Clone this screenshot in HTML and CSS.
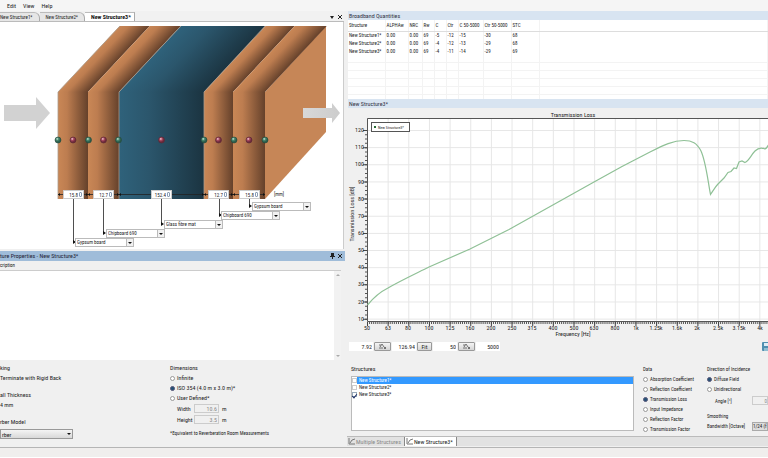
FILE: index.html
```
<!DOCTYPE html>
<html lang="en">
<head>
<meta charset="utf-8">
<title>New Structure3*</title>
<link rel="stylesheet" href="styles.css">
</head>
<body>
<nav class="menu"><a href="#">Edit</a><a href="#">View</a><a href="#">Help</a></nav>
<main class="workspace">
  <section class="left">
    <div class="doc-tabs">
      <button class="doc-tab">New Structure1*</button>
      <button class="doc-tab">New Structure2*</button>
      <button class="doc-tab active">New Structure3*</button>
      <span class="win-icons"><svg width="6" height="6" viewBox="0 0 6 6"><path d="M1 2h4L3 5z"/></svg><svg width="6" height="6" viewBox="0 0 6 6"><path class="cross" d="M1 1l4 4M5 1l-4 4"/></svg></span>
    </div>
    <div class="canvas">
      <svg class="layers" width="345" height="227" viewBox="0 22 345 227">
        <defs>
          <linearGradient id="wood"><stop offset="0" stop-color="#c98756"/><stop offset=".3" stop-color="#bd7d50"/><stop offset="1" stop-color="#65412b"/></linearGradient>
          <linearGradient id="wool"><stop offset="0" stop-color="#2f627b"/><stop offset=".35" stop-color="#2b566c"/><stop offset="1" stop-color="#1b3441"/></linearGradient>
          <linearGradient id="arrow"><stop offset="0" stop-color="#d8d8d8"/><stop offset="1" stop-color="#cccccc"/></linearGradient>
          <radialGradient id="green" cx=".38" cy=".32"><stop offset="0" stop-color="#d5eee2"/><stop offset=".45" stop-color="#4d8d74"/><stop offset="1" stop-color="#2a5c4a"/></radialGradient>
          <radialGradient id="red" cx=".38" cy=".32"><stop offset="0" stop-color="#f6dce2"/><stop offset=".45" stop-color="#b04e66"/><stop offset="1" stop-color="#6f2a3c"/></radialGradient>
        </defs>
        <path d="M265 92L326 26V132L265 199z" fill="#c68657"/>
        <g transform="matrix(1 0 -.935 1 86 0)">
          <rect x="58" y="26" width="30" height="66" fill="url(#wood)"/>
          <rect x="88" y="26" width="31" height="66" fill="url(#wood)"/>
          <rect x="119" y="26" width="85" height="66" fill="url(#wool)"/>
          <rect x="204" y="26" width="29" height="66" fill="url(#wood)"/>
          <rect x="233" y="26" width="32" height="66" fill="url(#wood)"/>
        </g>
        <rect x="58" y="92" width="30" height="107" fill="url(#wood)"/>
        <rect x="88" y="92" width="31" height="107" fill="url(#wood)"/>
        <rect x="119" y="92" width="85" height="107" fill="url(#wool)"/>
        <rect x="204" y="92" width="29" height="107" fill="url(#wood)"/>
        <rect x="233" y="92" width="32" height="107" fill="url(#wood)"/>
        <path d="M58 199V92L120 26M119 199V92L181 26M204 199V92L265 26" fill="none" stroke="#a99a8c" stroke-width=".8"/>
        <path d="M4 105H36V97L50 113L36 129V121H4z" fill="#d2d2d2"/>
        <path d="M303 108H332V103L340 113L332 123V118H303z" fill="url(#arrow)"/>
        <path d="M58 194.500H265M73.500 199V242M103.500 199V233M161.500 199V224M219.500 199V215M249.500 199V206" fill="none" stroke="#222" stroke-width=".8"/>
        <path d="M60 193l-2 1.500 2 1.500zM86 193l2 1.500-2 1.500zM90 193l-2 1.500 2 1.500zM117 193l2 1.500-2 1.500zM121 193l-2 1.500 2 1.500zM202 193l2 1.500-2 1.500zM206 193l-2 1.500 2 1.500zM231 193l2 1.500-2 1.500zM235 193l-2 1.500 2 1.500zM263 193l2 1.500-2 1.500zM73 240l3 2-3 2zM103 231l3 2-3 2zM161 222l3 2-3 2zM219 213l3 2-3 2zM249 204l3 2-3 2z" fill="#111"/>
        <g fill="url(#green)" stroke="#24483b" stroke-width=".6"><circle cx="58" cy="140" r="3"/><circle cx="88.500" cy="140" r="3"/><circle cx="118.500" cy="140" r="3"/><circle cx="204" cy="140" r="3"/><circle cx="234" cy="140" r="3"/><circle cx="265" cy="140" r="3"/></g>
        <g fill="url(#red)" stroke="#572532" stroke-width=".6"><circle cx="73" cy="140" r="3"/><circle cx="103.500" cy="140" r="3"/><circle cx="161.500" cy="140" r="3"/><circle cx="218.500" cy="140" r="3"/><circle cx="249" cy="140" r="3"/></g>
      </svg>
      <label class="thick t1"><input value="15.8" aria-label="Thickness 1"><i></i></label>
      <label class="thick t2"><input value="12.7" aria-label="Thickness 2"><i></i></label>
      <label class="thick t3"><input value="152.4" aria-label="Thickness 3"><i></i></label>
      <label class="thick t4"><input value="12.7" aria-label="Thickness 4"><i></i></label>
      <label class="thick t5"><input value="15.8" aria-label="Thickness 5"><i></i></label>
      <span class="unit">[mm]</span>
      <label class="combo m1"><select aria-label="Material 1"><option>Gypsum board</option></select><i></i></label>
      <label class="combo m2"><select aria-label="Material 2"><option>Chipboard 690</option></select><i></i></label>
      <label class="combo m3"><select aria-label="Material 3"><option>Glass fibre mat</option></select><i></i></label>
      <label class="combo m4"><select aria-label="Material 4"><option>Chipboard 690</option></select><i></i></label>
      <label class="combo m5"><select aria-label="Material 5"><option>Gypsum board</option></select><i></i></label>
    </div>
    <div class="prop-title"><span>ture Properties - New Structure3*</span><span class="win-icons"><svg width="6" height="6" viewBox="0 0 6 6"><path d="M2 0h3v3h1v1H4v2H3V4H1V3h1z"/></svg><svg width="6" height="6" viewBox="0 0 6 6"><path class="cross" d="M1 1l4 4M5 1l-4 4"/></svg></span></div>
    <label class="desc-label" for="desc">cription</label>
    <div class="desc"><textarea id="desc"></textarea><div class="scroll"><i class="up"></i><i class="down"></i></div></div>
    <div class="props">
      <div class="backing">
        <h3>king</h3>
        <p>Terminate with Rigid Back</p>
        <h3 class="gap">all Thickness</h3>
        <p>4 mm</p>
        <h3 class="gap"><label for="model">rber Model</label></h3>
        <div class="combo model"><select id="model"><option>rber</option></select><i></i></div>
      </div>
      <fieldset class="dims">
        <legend>Dimensions</legend>
        <label class="radio"><input type="radio" name="dim">Infinite</label>
        <label class="radio"><input type="radio" name="dim" checked>ISO 354 (4.0 m x 3.0 m)*</label>
        <label class="radio"><input type="radio" name="dim">User Defined*</label>
        <div class="size"><label for="w">Width</label><input id="w" value="10.6" disabled><span>m</span></div>
        <div class="size"><label for="h">Height</label><input id="h" value="3.5" disabled><span>m</span></div>
        <p class="note">*Equivalent to Reverberation Room Measurements</p>
      </fieldset>
    </div>
  </section>
  <section class="right">
    <h2 class="bar">Broadband Quantities</h2>
    <div class="quantities">
      <table>
        <colgroup><col class="c1"><col class="c2"><col class="c3"><col class="c4"><col class="c4"><col class="c4"><col class="c5"><col class="c6"><col class="c6"><col></colgroup>
        <thead><tr><th>Structure</th><th>ALPHAw</th><th>NRC</th><th>Rw</th><th>C</th><th>Ctr</th><th>C 50-5000</th><th>Ctr 50-5000</th><th>STC</th><th></th></tr></thead>
        <tbody>
        <tr><td>New Structure1*</td><td>0.00</td><td>0.00</td><td>69</td><td>-5</td><td>-12</td><td>-15</td><td>-30</td><td>68</td><td></td></tr>
        <tr><td>New Structure2*</td><td>0.00</td><td>0.00</td><td>69</td><td>-4</td><td>-12</td><td>-13</td><td>-29</td><td>68</td><td></td></tr>
        <tr><td>New Structure3*</td><td>0.00</td><td>0.00</td><td>69</td><td>-4</td><td>-11</td><td>-14</td><td>-29</td><td>69</td><td></td></tr>
        </tbody>
        <tfoot><tr><td></td><td></td><td></td><td></td><td></td><td></td><td></td><td></td><td></td><td></td></tr></tfoot>
      </table>
    </div>
    <h2 class="bar">New Structure3*</h2>
    <svg class="chart" viewBox="345 108 423 230">
      <defs><pattern id="grid" x="367" y="130" width="20.65" height="17.15" patternUnits="userSpaceOnUse"><path d="M0 .5H20.650M.5 0V17.150" stroke="#e6e6e6" fill="none"/></pattern></defs>
      <rect x="367" y="118" width="402" height="203" fill="#fff"/>
      <rect x="367" y="118" width="402" height="203" fill="url(#grid)"/>
      <path d="M768 118.500H367.500V321.500H768" fill="none" stroke="#555"/>
      <path d="M367 323H768" stroke="#555" stroke-width="2" stroke-dasharray="1 1.065"/>
      <path d="M367 324H768" stroke="#444" stroke-width="4" stroke-dasharray="1 19.65"/>
      <path d="M366 130V321" stroke="#555" stroke-width="2" stroke-dasharray="1 3.288"/>
      <path d="M365 130V320" stroke="#444" stroke-width="4" stroke-dasharray="1 16.15"/>
      <path d="M367.500 305C374 297 381 291.500 388 288C400 281 415 274 429 267L470 249L509 229.500L560 201L594 182L622 166.500L650 152C664 145 673 140.500 684 140.500C692 140.500 697 143 701 151C706 162 708 182 710.500 194.500C713 191 715 187 718 184L724 178L728 172.500L731 171.500L734 168L736.500 168.500L739 162L742 161L745 162.500C749 161 751 155 755 151C759 147 763 148 765 149C767 148 768 146 769 144" fill="none" stroke="#8fc096" stroke-width="1.200"/>
      <rect x="371.500" y="122.500" width="38" height="9" fill="#fff" stroke="#555"/>
      <rect x="374" y="126" width="2" height="2" fill="#276b35"/>
      <text x="378" y="129" class="small">New Structure3*</text>
      <g class="mid"><text x="573" y="117">Transmission Loss</text><text x="573" y="336">Frequency [Hz]</text><text transform="translate(354 214) rotate(-90)">Transmission Loss [dB]</text>
      <text x="367" y="330">50</text><text x="388" y="330">63</text><text x="408" y="330">80</text><text x="429" y="330">100</text><text x="450" y="330">125</text><text x="470" y="330">160</text><text x="491" y="330">200</text><text x="512" y="330">250</text><text x="532" y="330">315</text><text x="553" y="330">400</text><text x="574" y="330">500</text><text x="594" y="330">630</text><text x="615" y="330">800</text><text x="636" y="330">1k</text><text x="656" y="330">1.25k</text><text x="677" y="330">1.6k</text><text x="697" y="330">2k</text><text x="718" y="330">2.5k</text><text x="739" y="330">3.15k</text><text x="760" y="330">4k</text></g>
      <g class="end"><text x="364" y="132">120</text><text x="364" y="149">110</text><text x="364" y="166">100</text><text x="364" y="184">90</text><text x="364" y="201">80</text><text x="364" y="218">70</text><text x="364" y="235">60</text><text x="364" y="252">50</text><text x="364" y="269">40</text><text x="364" y="286">30</text><text x="364" y="304">20</text><text x="364" y="321">10</text></g>
    </svg>
    <div class="ranges">
      <input value="7.92" aria-label="Y minimum"><button aria-label="Y axis"><svg width="9" height="7" viewBox="0 0 9 7"><path d="M1 2h2M2 4l2-3 2 3M1 5h4M6 4l2 2M8 4l-2 2"/></svg></button>
      <input value="126.94" aria-label="Y maximum"><button class="fit">Fit</button>
      <input value="50" aria-label="X minimum"><button aria-label="X axis"><svg width="9" height="7" viewBox="0 0 9 7"><path d="M1 2h2M2 4l2-3 2 3M1 5h4M6 4l2 2M8 4l-2 2"/></svg></button>
      <input value="5000" aria-label="X maximum">
      <button class="save" aria-label="Save"><svg width="6" height="9" viewBox="0 0 6 9"><rect width="8" height="9" rx="1" fill="#4f8fb0"/><rect x="2" y="1" width="4" height="3" fill="#dcecf5"/><rect x="2" y="6" width="4" height="3" fill="#91bdd2"/></svg></button>
    </div>
    <div class="options">
      <div class="structs">
        <h3>Structures</h3>
        <div class="list">
          <label class="check sel"><input type="checkbox"><span>New Structure1*</span></label>
          <label class="check"><input type="checkbox"><span>New Structure2*</span></label>
          <label class="check"><input type="checkbox" checked><span>New Structure3*</span></label>
        </div>
      </div>
      <fieldset class="data">
        <legend>Data</legend>
        <label class="radio"><input type="radio" name="data">Absorption Coefficient</label>
        <label class="radio"><input type="radio" name="data">Reflection Coefficient</label>
        <label class="radio"><input type="radio" name="data" checked>Transmission Loss</label>
        <label class="radio"><input type="radio" name="data">Input Impedance</label>
        <label class="radio"><input type="radio" name="data">Reflection Factor</label>
        <label class="radio"><input type="radio" name="data">Transmission Factor</label>
      </fieldset>
      <div class="incidence">
        <fieldset>
          <legend>Direction of Incidence</legend>
          <label class="radio"><input type="radio" name="inc" checked>Diffuse Field</label>
          <label class="radio"><input type="radio" name="inc">Unidirectional</label>
          <div class="field angle"><label for="angle">Angle [°]</label><input id="angle" value="0" disabled></div>
        </fieldset>
        <h3>Smoothing</h3>
        <div class="field"><label for="bw">Bandwidth [Octave]</label><select id="bw"><option>1/24 (f</option></select></div>
      </div>
    </div>
    <div class="bottom-tabs">
      <button class="btab"><svg width="7" height="7" viewBox="0 0 7 7"><path d="M1 0v6h6M2 5l2-3 3-1"/></svg>Multiple Structures</button>
      <button class="btab active"><svg width="7" height="7" viewBox="0 0 7 7"><path d="M1 0v6h6M2 5l2-3 3-1"/></svg>New Structure3*</button>
    </div>
  </section>
</main>
<footer class="status"></footer>
</body>
</html>
```

FILE: styles.css
```
* { box-sizing: border-box; }
body {
  margin: 0;
  background: #fff;
  color: #222;
  font: 6px/10px "Roboto Condensed", "Open Sans Condensed", Lato, "Liberation Sans", sans-serif;
}
button, input, select, textarea {
  font: inherit;
  color: inherit;
  margin: 0;
  padding: 0;
  border: 0;
  border-radius: 0;
  background: none;
  appearance: none;
  outline: 0;
  min-width: 0;
}
h2, h3, p { margin: 0; font: inherit; }
fieldset { margin: 0; padding: 0; border: 0; min-width: 0; }
legend { display: block; padding: 0; height: 10px; }
svg { display: block; }

.menu { display: flex; gap: 7px; height: 11px; padding-left: 7px; background: #f5f5f5; }
.menu a { color: #222; text-decoration: none; line-height: 12px; }
.workspace { display: grid; grid-template-columns: 345fr 423fr; padding-bottom: 1px; background: #f0f0f0; border-bottom: 1px solid #b5b5b5; }
.left, .right { display: flex; flex-direction: column; min-width: 0; }
.status { height: 9px; background: #f0eeed; }

.doc-tabs { display: flex; align-items: stretch; height: 11px; margin-right: 1px; padding-top: 1px; border-bottom: 1px solid #bbb; background: #f1f1f1; font-size: 5px; }
.doc-tab { padding: 0 6px 0 0; border-top: 1px solid #bbb; border-right: 1px solid #aaa; border-radius: 0 6px 0 0; background: #e6e6e6; line-height: 8px; }
.doc-tab + .doc-tab { padding-left: 6px; }
.doc-tab.active { padding-right: 3px; border-radius: 0; background: #fff; font-size: 6px; font-weight: bold; color: #111; }
.win-icons { display: flex; align-items: center; gap: 2px; margin-left: auto; padding-right: 1px; }
.win-icons svg { fill: #222; }
.cross { stroke: #222; fill: none; }

.canvas { position: relative; height: 227px; margin-right: 1px; background: #fff; border-right: 1px solid #ccc; overflow: hidden; }
.thick { position: absolute; top: 168px; display: flex; align-items: center; width: 21px; height: 9px; background: #fff; border: 1px solid #ccc; }
.thick input { width: 14px; height: 7px; text-align: right; font-size: 5px; }
.thick i { width: 3px; height: 5px; margin-left: 1px; border: 1px solid #8a9db5; border-radius: 1px; }
.t1 { left: 63px; } .t2 { left: 93px; } .t3 { left: 151px; } .t4 { left: 208px; } .t5 { left: 239px; }
.unit { position: absolute; left: 274px; top: 167px; font-size: 5px; }
.combo { display: flex; align-items: center; width: 59px; height: 9px; background: #fff; border: 1px solid #bbb; }
.combo select { flex: 1; height: 7px; padding-left: 1px; line-height: 7px; }
.combo i { display: grid; place-items: center; width: 7px; height: 7px; border-left: 1px solid #bbb; background: #f1f1f1; }
.combo i::after { content: ""; border: 2px solid transparent; border-top-color: #111; border-bottom: 0; }
.canvas .combo { position: absolute; }
.canvas select { font-size: 5px; }
.m1 { left: 75px; top: 216px; } .m2 { left: 106px; top: 207px; } .m3 { left: 164px; top: 198px; } .m4 { left: 221px; top: 189px; } .m5 { left: 252px; top: 180px; }

.prop-title { display: flex; height: 10px; margin-top: 2px; padding-right: 1px; background: #9fbcd9; color: #223; }
.desc-label { height: 9px; line-height: 9px; font-size: 5px; }
.desc { display: flex; height: 90px; margin-right: 4px; border-top: 1px solid #ccc; background: #fff; }
.desc textarea { flex: 1; resize: none; }
.scroll { display: flex; flex-direction: column; justify-content: space-between; align-items: center; width: 7px; padding: 3px 0; background: #f2f2f2; }
.up, .down { border: 2px solid transparent; }
.up { border-bottom-color: #aaa; border-top: 0; }
.down { border-top-color: #aaa; border-bottom: 0; }

.props { display: grid; grid-template-columns: 170fr 175fr; padding-top: 3px; }
.backing .gap { margin-top: 7px; }
.model { width: 73px; height: 10px; margin-top: 2px; border-color: #999; background: linear-gradient(#f4f4f4, #d8d8d8); }
.model i { border: 0; background: none; }
.radio { display: flex; align-items: center; gap: 2px; height: 10px; white-space: nowrap; }
.radio input { flex: none; width: 5px; height: 5px; border: 1px solid #999; border-radius: 50%; background: #fff; }
.radio input:checked { border-color: #557; background: #245277; }
.size { display: grid; grid-template-columns: 16px 25px auto; align-items: center; gap: 1px; height: 11px; padding-left: 7px; }
.size input { height: 9px; padding-right: 1px; border: 1px solid #ccc; text-align: right; color: #888; }
.size span { padding-left: 2px; }
.note { font-size: 5px; margin-top: 3px; white-space: nowrap; }

.right { padding-left: 2px; }
.bar { height: 9px; margin-left: 1px; padding-left: 1px; background: #d8e4f1; line-height: 9px; color: #334; }
.quantities { height: 79px; margin-left: 1px; background: #fff; font-size: 5px; overflow: hidden; }
table { width: 100%; table-layout: fixed; border-collapse: collapse; }
th, td { height: 8px; padding: 0 0 0 1px; line-height: 7px; font-weight: normal; text-align: left; white-space: nowrap; border-right: 1px solid #f3f3f3; }
th { height: 11px; border-bottom: 1px solid #ddd; }
tfoot td { height: 44px; background: repeating-linear-gradient(#fff 0 7px, #f3f3f3 7px 8px); }
.c1 { width: 37px; } .c2 { width: 23px; } .c3 { width: 14px; } .c4 { width: 12px; } .c5 { width: 25px; } .c6 { width: 28px; }
.chart { width: auto; margin-left: -2px; }
.chart text { fill: #222; }
.chart .small { font-size: 4px; }
.mid { text-anchor: middle; }
.end { text-anchor: end; }

.ranges { display: flex; align-items: center; gap: 1px; height: 17px; padding-left: 2px; }
.ranges input { width: 24px; height: 9px; padding-right: 1px; background: #fff; text-align: right; }
.ranges button { display: grid; place-items: center; width: 17px; height: 9px; border: 1px solid #999; border-radius: 1px; background: linear-gradient(#f5f5f5, #d5d5d5); line-height: 7px; }
.ranges path { fill: none; stroke: #555; stroke-width: .8; }
.ranges .fit { width: 15px; }
.ranges .save { width: 6px; margin-left: auto; border: 0; }

.options { display: grid; grid-template-columns: minmax(0, 292fr) minmax(0, 64fr) minmax(0, 61fr); height: 81px; padding: 9px 0 0 4px; }
.structs { padding-right: 9px; }
.list { height: 55px; margin-top: 2px; border: 1px solid #bbb; background: #fff; }
.check { display: flex; align-items: center; height: 7px; line-height: 7px; }
.check span { flex: 1; padding-left: 2px; }
.check input { display: grid; place-items: center; width: 5px; height: 5px; border: 1px solid #ccc; background: #fff; }
.check input:checked { border-color: #9ab; }
.check input:checked::after { content: ""; width: 2px; height: 4px; border: solid #236; border-width: 0 1px 1px 0; transform: rotate(40deg); }
.sel span { background: #3399ff; color: #fff; }
.list, .data, .incidence { font-size: 5px; }
.incidence h3 { margin-top: 4px; }
.field { display: grid; grid-template-columns: minmax(0, 1fr) 16px; align-items: center; height: 10px; white-space: nowrap; }
.field input, .field select { height: 9px; border: 1px solid #aaa; text-align: right; line-height: 7px; }
.field input { border-color: #ccc; color: #888; }
.field select { text-align: left; background: #ddd; }
.angle { height: 13px; }
.angle label { padding-left: 8px; }

.bottom-tabs { display: flex; height: 10px; border-top: 1px solid #bbb; background: #e2e2e2; }
.btab { display: flex; align-items: center; gap: 1px; height: 9px; padding: 0 3px 0 1px; border-right: 1px solid #888; color: #888; }
.btab.active { background: #fff; color: #222; }
.btab path { fill: none; stroke: #777; }
```
